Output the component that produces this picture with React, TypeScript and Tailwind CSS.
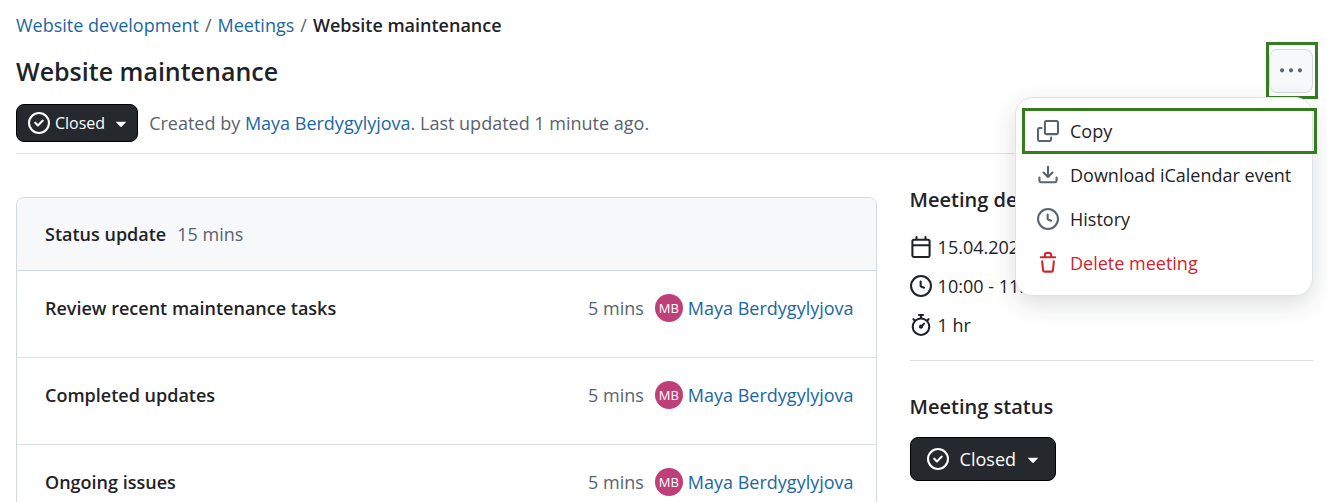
import type { ReactNode } from "react";

const icons = {
  copy: "M0 6.75C0 5.784.784 5 1.75 5h1.5a.75.75 0 0 1 0 1.5h-1.5a.25.25 0 0 0-.25.25v7.5c0 .138.112.25.25.25h7.5a.25.25 0 0 0 .25-.25v-1.5a.75.75 0 0 1 1.5 0v1.5A1.75 1.75 0 0 1 9.25 16h-7.5A1.75 1.75 0 0 1 0 14.25ZM5 1.75C5 .784 5.784 0 6.75 0h7.5C15.216 0 16 .784 16 1.75v7.5A1.75 1.75 0 0 1 14.25 11h-7.5A1.75 1.75 0 0 1 5 9.25Zm1.75-.25a.25.25 0 0 0-.25.25v7.5c0 .138.112.25.25.25h7.5a.25.25 0 0 0 .25-.25v-7.5a.25.25 0 0 0-.25-.25Z",
  download:
    "M2.75 14A1.75 1.75 0 0 1 1 12.25v-2.5a.75.75 0 0 1 1.5 0v2.5c0 .138.112.25.25.25h10.5a.25.25 0 0 0 .25-.25v-2.5a.75.75 0 0 1 1.5 0v2.5A1.75 1.75 0 0 1 13.25 14ZM7.25 7.689V2a.75.75 0 0 1 1.5 0v5.689l1.97-1.969a.749.749 0 1 1 1.06 1.06l-3.25 3.25a.749.749 0 0 1-1.06 0L4.22 6.78a.749.749 0 1 1 1.06-1.06l1.97 1.969Z",
  clock:
    "M8 0a8 8 0 1 1 0 16A8 8 0 0 1 8 0ZM1.5 8a6.5 6.5 0 1 0 13 0 6.5 6.5 0 0 0-13 0Zm7-3.25v2.992l2.028.812a.75.75 0 0 1-.557 1.392l-2.5-1A.751.751 0 0 1 7 8.25v-3.5a.75.75 0 0 1 1.5 0Z",
  trash:
    "M11 1.75V3h2.25a.75.75 0 0 1 0 1.5H2.75a.75.75 0 0 1 0-1.5H5V1.75C5 .784 5.784 0 6.75 0h2.5C10.216 0 11 .784 11 1.75ZM4.496 6.675l.66 6.6a.25.25 0 0 0 .249.225h5.19a.25.25 0 0 0 .249-.225l.66-6.6a.75.75 0 0 1 1.492.149l-.66 6.6A1.748 1.748 0 0 1 10.595 15h-5.19a1.75 1.75 0 0 1-1.741-1.575l-.66-6.6a.75.75 0 1 1 1.492-.15ZM6.5 1.75V3h3V1.75a.25.25 0 0 0-.25-.25h-2.5a.25.25 0 0 0-.25.25Z",
  calendar:
    "M4.75 0a.75.75 0 0 1 .75.75V2h5V.75a.75.75 0 0 1 1.5 0V2h1.25c.966 0 1.75.784 1.75 1.75v10.5A1.75 1.75 0 0 1 13.25 16H2.75A1.75 1.75 0 0 1 1 14.25V3.75C1 2.784 1.784 2 2.75 2H4V.75A.75.75 0 0 1 4.75 0ZM2.5 7.5v6.75c0 .138.112.25.25.25h10.5a.25.25 0 0 0 .25-.25V7.5Zm10.75-4H2.75a.25.25 0 0 0-.25.25V6h11V3.75a.25.25 0 0 0-.25-.25Z",
  stopwatch:
    "M5.75.75A.75.75 0 0 1 6.5 0h3a.75.75 0 0 1 0 1.5h-.75v1l-.001.041a6.724 6.724 0 0 1 3.464 1.435l.007-.006.75-.75a.749.749 0 0 1 1.275.326.749.749 0 0 1-.215.734l-.75.75-.006.007a6.75 6.75 0 1 1-10.548 0L2.72 5.03l-.75-.75a.751.751 0 0 1 .018-1.042.751.751 0 0 1 1.042-.018l.75.75.007.006A6.72 6.72 0 0 1 7.25 2.541V1.5H6.5a.75.75 0 0 1-.75-.75ZM8 14.5a5.25 5.25 0 1 0-.001-10.501A5.25 5.25 0 0 0 8 14.5Zm.389-6.7 1.33-1.33a.75.75 0 1 1 1.061 1.06L9.45 8.861A1.503 1.503 0 0 1 8 10.75a1.499 1.499 0 1 1 .389-2.95Z",
  closed:
    "M11.28 6.78a.75.75 0 0 0-1.06-1.06L7.25 8.69 5.78 7.22a.75.75 0 0 0-1.06 1.06l2 2a.75.75 0 0 0 1.06 0l3.5-3.5ZM16 8A8 8 0 1 1 0 8a8 8 0 0 1 16 0Zm-1.5 0a6.5 6.5 0 1 0-13 0 6.5 6.5 0 0 0 13 0Z",
  more: "M8 9a1.5 1.5 0 1 0 0-3 1.5 1.5 0 0 0 0 3ZM1.5 9a1.5 1.5 0 1 0 0-3 1.5 1.5 0 0 0 0 3Zm13 0a1.5 1.5 0 1 0 0-3 1.5 1.5 0 0 0 0 3Z",
  caret:
    "m4.427 7.427 3.396 3.396a.25.25 0 0 0 .354 0l3.396-3.396A.25.25 0 0 0 11.396 7H4.604a.25.25 0 0 0-.177.427Z",
};

function Icon({ name, className = "" }: { name: keyof typeof icons; className?: string }) {
  return (
    <svg
      className={`size-[22px] shrink-0 ${className}`}
      viewBox="0 0 16 16"
      fill="currentColor"
      aria-hidden="true"
    >
      <path d={icons[name]} />
    </svg>
  );
}

const agenda = ["Review recent maintenance tasks", "Completed updates", "Ongoing issues"];

function UserLink() {
  return (
    <a href="#user" className="text-[#1a67a3]">
      Maya Berdygylyjova
    </a>
  );
}

function Detail({ icon, children }: { icon: keyof typeof icons; children: ReactNode }) {
  return (
    <li className="flex items-center gap-[6px]">
      <Icon name={icon} />
      <span>{children}</span>
    </li>
  );
}

function MenuItem({ icon, children }: { icon: keyof typeof icons; children: ReactNode }) {
  return (
    <li role="none">
      <button
        role="menuitem"
        className="flex w-full items-center gap-[11px] px-[14px] py-2 text-left whitespace-nowrap"
      >
        <Icon name={icon} className="text-[#59636e]" />
        {children}
      </button>
    </li>
  );
}

export default function App() {
  return (
    <div className="h-screen overflow-hidden bg-white pt-[11px] pr-[14px] pl-4 font-['Open_Sans','Noto_Sans',sans-serif] text-lg leading-7 text-[#1f2328]">
      <header className="border-b border-[#dde1e5] pb-[11px]">
        <nav aria-label="Breadcrumb">
          <ol className="flex gap-[6px]">
            <li>
              <a href="#project" className="text-[#1a67a3]">
                Website development
              </a>
            </li>
            <li className="text-[#59636e]">/</li>
            <li>
              <a href="#meetings" className="text-[#1a67a3]">
                Meetings
              </a>
            </li>
            <li className="text-[#59636e]">/</li>
            <li className="font-semibold">Website maintenance</li>
          </ol>
        </nav>
        <div className="mt-[10px] flex items-center justify-between">
          <h1 className="text-[25px] font-semibold">Website maintenance</h1>
          <div className="relative">
            <button
              aria-label="More actions"
              className="flex size-11 items-center justify-center rounded-lg border border-[#d1d9e0] bg-[#f6f8fa] text-[#59636e]"
            >
              <Icon name="more" />
            </button>
            <span className="pointer-events-none absolute -top-[7px] -right-[5px] -bottom-[6px] -left-[3px] border-3 border-[#347d1f]" />
            <ul
              role="menu"
              className="absolute top-12 right-0 z-10 w-[298px] rounded-[18px] border border-[#dfe3e8] bg-white px-[7px] pt-[11px] pb-[10px] shadow-[0_8px_24px_rgba(37,41,46,0.16)]"
            >
              <MenuItem icon="copy">Copy</MenuItem>
              <MenuItem icon="download">Download iCalendar event</MenuItem>
              <MenuItem icon="clock">History</MenuItem>
              <li role="none">
                <button
                  role="menuitem"
                  className="flex w-full items-center gap-[11px] px-[14px] py-2 text-left text-[#d1242f]"
                >
                  <Icon name="trash" />
                  Delete meeting
                </button>
              </li>
              <li
                role="none"
                className="pointer-events-none absolute top-[10px] -right-[5px] left-[6px] h-[46px] border-3 border-[#347d1f]"
              />
            </ul>
          </div>
        </div>
        <div className="mt-[11px] flex items-center gap-[11px]">
          <button className="flex h-[38px] items-center gap-[5px] rounded-lg border border-black bg-[#25292e] pr-[5px] pl-[11px] text-base text-white">
            <Icon name="closed" />
            Closed
            <Icon name="caret" />
          </button>
          <p className="text-[#59636e]">
            Created by <UserLink />. Last updated 1 minute ago.
          </p>
        </div>
      </header>

      <div className="grid grid-cols-[minmax(0,32fr)_minmax(0,15fr)] gap-[33px]">
        <main className="mt-[43px] rounded-t-lg border border-[#d1d9e0]">
          <div className="flex gap-[11px] rounded-t-lg border-b border-[#d1d9e0] bg-[#f6f8fa] px-7 py-[22px]">
            <h2 className="font-semibold">Status update</h2>
            <span className="text-[#59636e]">15 mins</span>
          </div>
          <ul>
            {agenda.map((title) => (
              <li
                key={title}
                className="flex items-center justify-between border-b border-[#dde1e5] pt-[23px] pr-[22px] pb-[35px] pl-7"
              >
                <h3 className="font-semibold">{title}</h3>
                <div className="flex items-center">
                  <span className="mr-[11px] text-[#59636e]">5 mins</span>
                  <span className="mr-[5px] flex size-7 items-center justify-center rounded-full bg-[#bf4078] text-[13px] text-white">
                    MB
                  </span>
                  <UserLink />
                </div>
              </li>
            ))}
          </ul>
        </main>

        <aside className="pt-8">
          <section className="border-b border-[#dde1e5] pb-[21px]">
            <h2 className="text-xl font-semibold">Meeting details</h2>
            <ul className="mt-[19px] flex flex-col gap-[11px]">
              <Detail icon="calendar">15.04.2025</Detail>
              <Detail icon="clock">10:00 - 11:00</Detail>
              <Detail icon="stopwatch">1 hr</Detail>
            </ul>
          </section>
          <section className="pt-8">
            <h2 className="text-xl font-semibold">Meeting status</h2>
            <button className="mt-4 flex h-11 items-center gap-[11px] rounded-lg border border-black bg-[#25292e] pr-[11px] pl-4 text-white">
              <Icon name="closed" />
              <span className="flex items-center gap-[6px]">
                Closed
                <Icon name="caret" />
              </span>
            </button>
          </section>
        </aside>
      </div>
    </div>
  );
}
